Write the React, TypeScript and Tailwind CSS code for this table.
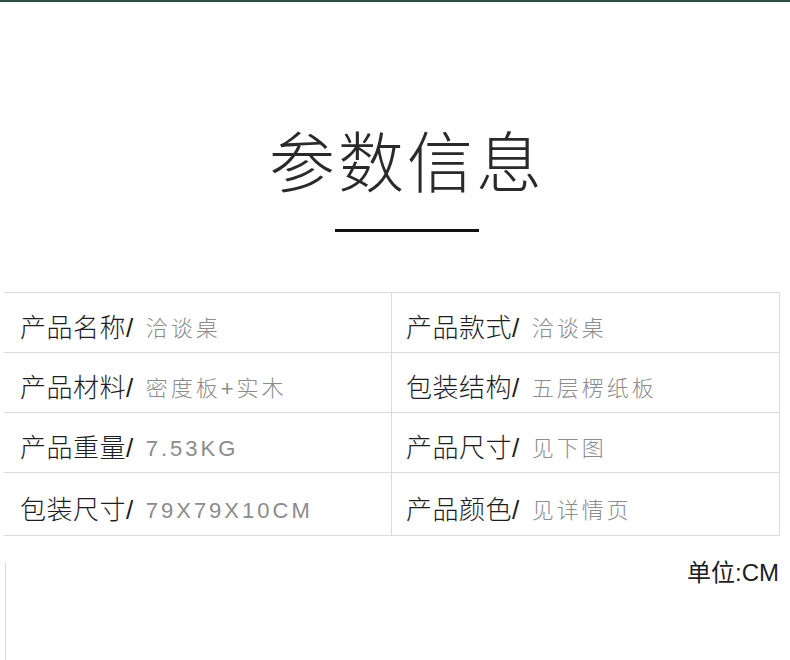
import React from 'react'

const rows: [string, string, string, string][] = [
  ['产品名称/', '洽谈桌', '产品款式/', '洽谈桌'],
  ['产品材料/', '密度板+实木', '包装结构/', '五层楞纸板'],
  ['产品重量/', '7.53KG', '产品尺寸/', '见下图'],
  ['包装尺寸/', '79X79X10CM', '产品颜色/', '见详情页'],
]

const font = { fontFamily: '"Liberation Sans", "Noto Sans CJK SC", sans-serif' }

const Cell = ({ label, value, right }: { label: string; value: string; right?: boolean }) => (
  <div
    className={`flex items-center pt-[12px] border-r border-[#dcdcdc] ${right ? 'pl-[14px]' : 'pl-[16px]'}`}
  >
    <span className="text-[26px] text-[#1e1e1e] tracking-[0.5px] font-light">{label}</span>
    <span className="ml-[12px] text-[22px] text-[#8c8c8c] tracking-[3px] font-light">{value}</span>
  </div>
)

export default function App() {
  return (
    <div className="w-[790px] h-[660px] bg-white overflow-hidden" style={font}>
      <div className="h-[2px] bg-[#2f4d43]" />
      {/* Title */}
      <div className="flex flex-col items-center pt-[129px] pl-[24px]">
        <h1 className="text-[66px] leading-none text-[#2a2a2a] font-light tracking-[3px]">参数信息</h1>
        <div className="mt-[32px] w-[144px] h-[3px] bg-[#111]" />
      </div>

      {/* Params table */}
      <div className="mt-[60px] ml-[4px] w-[776px] border-t border-[#dcdcdc]">
        {rows.map((r, i) => (
          <div
            key={i}
            className={`grid grid-cols-[388px_388px] border-b border-[#dcdcdc] ${i === rows.length - 1 ? 'h-[63px]' : 'h-[60px]'}`}
          >
            <Cell label={r[0]} value={r[1]} />
            <Cell label={r[2]} value={r[3]} right />
          </div>
        ))}
      </div>

      <div className="flex">
        <div className="ml-[5px] mt-[26px] w-px h-[120px] bg-[#dcdcdc]" />
        <div className="ml-auto mr-[11px] mt-[25px] text-[24px] text-[#1e1e1e] leading-none">单位:CM</div>
      </div>
    </div>
  )
}
